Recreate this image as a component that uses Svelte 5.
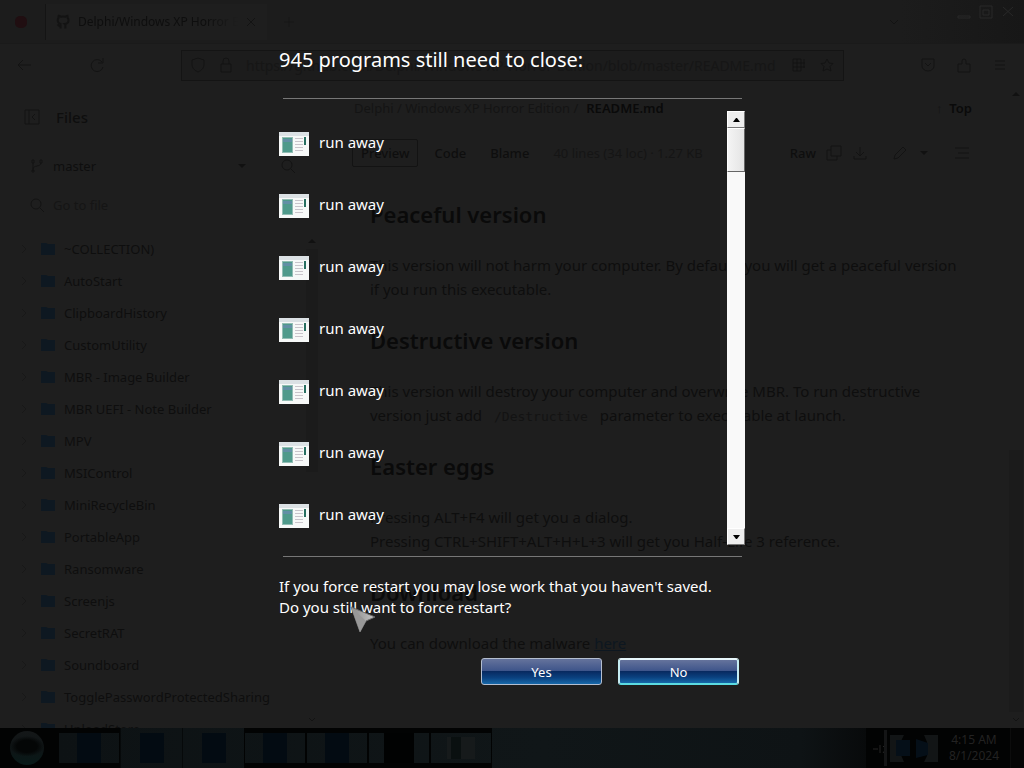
<script>
  const folders = [
    '~COLLECTION)', 'AutoStart', 'ClipboardHistory', 'CustomUtility', 'MBR - Image Builder',
    'MBR UEFI - Note Builder', 'MPV', 'MSIControl', 'MiniRecycleBin', 'PortableApp', 'Ransomware',
    'Screenjs', 'SecretRAT', 'Soundboard', 'TogglePasswordProtectedSharing', 'UploadStore'
  ];
  const programs = Array.from({ length: 7 }, () => 'run away');
  const tasks = ['framed', 'open', 'open', 'framed', 'framed', 'dark', 'window'];
</script>

<div class="screen">
  <div class="desktop">
    <header class="tabs">
      <span class="firefox"></span>
      <div class="tab">
        <svg class="mark" viewBox="0 0 16 16"><path d="M5.6 14.5v-2.6c-2 .4-2.500-.9-3-1.500M10.400 14.500v-2.900c0-.8-.2-1.300-.6-1.600 2.400-.3 3.700-1.400 3.700-3.800 0-1-.3-1.700-.9-2.300.2-.6.2-1.400-.1-2.100-.9 0-1.700.5-2.200.9a8 8 0 0 0-4.400 0c-.5-.4-1.400-.9-2.200-.9-.3.700-.3 1.500-.1 2.100-.6.600-.9 1.300-.9 2.300 0 2.400 1.400 3.500 3.700 3.800" /></svg>
        <span class="tab-name">Delphi/Windows XP Horror Edition</span>
        <svg class="small" viewBox="0 0 12 12"><path d="M2 2l8 8M10 2l-8 8" /></svg>
      </div>
      <svg class="plus" viewBox="0 0 16 16"><path d="M8 3v10M3 8h10" /></svg>
      <svg class="caret all" viewBox="0 0 12 12"><path d="M2 4l4 4 4-4" /></svg>
      <div class="window-buttons">
        <svg viewBox="0 0 16 16"><path d="M2 12h12v2H2z" /></svg>
        <svg viewBox="0 0 16 16"><path d="M2 2h12v12H2zM5 6h6v5H5z" /></svg>
        <svg viewBox="0 0 16 16"><path d="M3 3l10 9M13 3L3 12" /></svg>
      </div>
    </header>

    <div class="toolbar">
      <svg viewBox="0 0 16 16"><path d="M15 8H2M7 3L2 8l5 5" /></svg>
      <svg class="reload" viewBox="0 0 16 16"><path d="M13 5a6 6 0 1 0 1 5M14 1v5H9" /></svg>
      <div class="address">
        <svg viewBox="0 0 16 16"><path d="M8 1l6 2v4c0 4-2 6-6 8-4-2-6-4-6-8V3z" /></svg>
        <svg viewBox="0 0 16 16"><path d="M3 7h10v8H3zM5 7V4a3 3 0 0 1 6 0v3" /></svg>
        <input aria-label="Address" value="https://github.com/Delphi/Windows-XP-Horror-Edition/blob/master/README.md" readonly />
        <svg class="strong" viewBox="0 0 16 16"><path d="M2 2h8v12H2zM2 6h12M2 10h12M6 2v12M13 2v9" /></svg>
        <svg viewBox="0 0 16 16"><path d="M8 2l2 4 4 .5-3 3 1 4.500-4-2-4 2 1-4.500-3-3L6 6z" /></svg>
      </div>
      <div class="extras">
        <svg viewBox="0 0 16 16"><path d="M2 2h12v7a6 5 0 0 1-12 0zM5 6l3 3 3-3" /></svg>
        <svg viewBox="0 0 16 16"><path d="M2 15V7h4V4a2 2 0 0 1 4 0v3h4v8z" /></svg>
        <svg viewBox="0 0 16 16"><path d="M3 4h10M3 8h10M3 12h10" /></svg>
      </div>
    </div>

    <div class="page">
      <aside>
        <div class="files">
          <svg viewBox="0 0 16 16"><path d="M1 1h14v14H1zM5 1v14M11 5L8 8l3 3" /></svg>
          <b>Files</b>
        </div>
        <div class="branch">
          <svg viewBox="0 0 16 16"><path d="M4 5v8M12 5c0 4-8 2-8 6M3 2h2v3H3zM11 2h2v3h-2zM3 12h2v2H3z" /></svg>
          <span>master</span>
          <svg class="caret" viewBox="0 0 12 12"><path class="solid" d="M2 4h8L6 8z" /></svg>
          <svg class="find" viewBox="0 0 16 16"><path d="M7 2a5 5 0 1 0 0 10A5 5 0 0 0 7 2zM11 11l4 4" /></svg>
        </div>
        <div class="search">
          <svg viewBox="0 0 16 16"><path d="M7 2a5 5 0 1 0 0 10A5 5 0 0 0 7 2zM11 11l4 4" /></svg>
          <span>Go to file</span>
        </div>
        <div class="tree-wrap">
          <ul>
            {#each folders as folder}
              <li>
                <svg class="small dim" viewBox="0 0 12 12"><path d="M4 2l4 4-4 4" /></svg>
                <svg class="folder" viewBox="0 0 16 16"><path d="M1 2h5l2 1h7v11H1z" /></svg>
                <span>{folder}</span>
              </li>
            {/each}
          </ul>
          <div class="tree-bar">
            <svg viewBox="0 0 12 12"><path class="solid" d="M2 8h8L6 4z" /></svg>
            <i></i>
            <svg viewBox="0 0 12 12"><path d="M3 4l3 3 3-3" /></svg>
          </div>
        </div>
      </aside>

      <main>
        <div class="crumbs">
          <span>Delphi / Windows XP Horror Edition /</span>
          <b>README.md</b>
          <span class="top">↑ &nbsp;<b>Top</b></span>
        </div>
        <div class="modes">
          <b class="current">Preview</b>
          <b>Code</b>
          <b>Blame</b>
          <span class="meta">40 lines (34 loc) · 1.27 KB</span>
          <div class="actions">
            <b>Raw</b>
            <svg viewBox="0 0 16 16"><path d="M5 1h10v10H5zM5 5H1v10h10v-4" /></svg>
            <svg viewBox="0 0 16 16"><path d="M8 2v8M4 7l4 4 4-4M2 11v3h12v-3" /></svg>
            <svg class="pencil" viewBox="0 0 16 16"><path d="M2 14l1-4 8-8 3 3-8 8z" /></svg>
            <svg class="small" viewBox="0 0 12 12"><path class="solid" d="M2 4h8L6 8z" /></svg>
            <svg class="outline" viewBox="0 0 16 16"><path d="M1 3h14M4 8h11M1 13h14" /></svg>
          </div>
        </div>
        <article>
          <h2>Peaceful version</h2>
          <p>This version will not harm your computer. By default, you will get a peaceful version<br />if you run this executable.</p>
          <h2>Destructive version</h2>
          <p>This version will destroy your computer and overwrite MBR. To run destructive<br />version just add <code>/Destructive</code> parameter to executable at launch.</p>
          <h2>Easter eggs</h2>
          <p>Pressing ALT+F4 will get you a dialog.<br />Pressing CTRL+SHIFT+ALT+H+L+3 will get you Half-Life 3 reference.</p>
          <h2>Download</h2>
          <p>You can download the malware <a href="#here">here</a></p>
        </article>
      </main>
      <div class="page-bar">
        <svg viewBox="0 0 12 12"><path class="solid" d="M2 8h8L6 4z" /></svg>
        <i></i>
        <svg viewBox="0 0 12 12"><path d="M3 4l3 3 3-3" /></svg>
      </div>
    </div>

    <footer>
      <span class="orb"></span>
      <div class="tasks">
        {#each tasks as task}
          <span class="task {task}"><i></i></span>
        {/each}
      </div>
      <svg class="tray" viewBox="0 0 66 40">
        <path class="sound" d="M1 21h5M8 17v8M11 18l3 3-3 4" />
        <path class="divider" d="M12 2h3v36h-3z" />
        <path class="plate" d="M18 7h14l-3 6v14l3 7H18zM52 7h14v27H52l3-6V14z" />
        <path class="glyph" d="M24 12h14v16H24zM44 11l12 4v12l-12 3z" />
      </svg>
      <div class="clock"><span>4:15 AM</span><span>8/1/2024</span></div>
      <span class="peek"></span>
    </footer>
  </div>

  <section class="dialog" role="dialog" aria-labelledby="title">
    <h1 id="title">945 programs still need to close:</h1>
    <div class="list">
      <ul>
        {#each programs as program}
          <li>
            <svg viewBox="0 0 30 24">
              <rect width="30" height="24" fill="#f7f9f8" />
              <rect width="30" height="4" fill="#dbe1e4" />
              <rect x="3" y="5" width="11" height="16" fill="#92bdb4" />
              <rect x="4" y="6" width="9" height="14" fill="#4f9a8b" />
              <path d="M4 7h9v3H4z" fill="#628fa5" />
              <path d="M16 6.500h8M16 9.500h8M16 12.500h8M16 15.500h8M16 18.500h8" stroke="#c9c5cb" />
              <rect x="25" y="5" width="2" height="8" fill="#286f61" />
            </svg>
            <span>{program}</span>
          </li>
        {/each}
      </ul>
      <div class="scrollbar">
        <button aria-label="Scroll up"><svg viewBox="0 0 7 4"><path d="M0 4h7L4 0H3z" /></svg></button>
        <div class="thumb"></div>
        <button class="down" aria-label="Scroll down"><svg viewBox="0 0 7 4"><path d="M0 0h7L4 4H3z" /></svg></button>
      </div>
    </div>
    <p>If you force restart you may lose work that you haven't saved.<br />Do you still want to force restart?</p>
    <div class="answers">
      <button>Yes</button>
      <button class="default">No</button>
    </div>
  </section>

  <svg class="cursor" viewBox="0 0 26 28">
    <defs><linearGradient id="steel"><stop offset="0" stop-color="#8a8a8a" /><stop offset="1" stop-color="#c4c4c4" /></linearGradient></defs>
    <path d="M1 1l24 10-9 4-6 11z" fill="url(#steel)" stroke="#6a6a6a" />
    <path d="M1 1l15 14-6 11z" fill="#989898" />
  </svg>
</div>

<style>
  :global(body) { background: #1e1e1e; }
  * { box-sizing: border-box; }
  ul, h1, h2, p { margin: 0; padding: 0; list-style: none; }
  .screen {
    position: relative;
    display: grid;
    grid-template: minmax(0, 1fr) / minmax(0, 1fr);
    height: 100vh;
    overflow: hidden;
    font-family: "Noto Sans", "Open Sans", sans-serif;
  }
  .desktop, .dialog { grid-area: 1 / 1; }

  .desktop { display: flex; flex-direction: column; min-height: 0; color: #0e0e0e; font-size: 13px; }
  .desktop svg { width: 16px; height: 16px; flex: none; fill: none; stroke: #131313; stroke-width: 1; }
  .desktop svg.small { width: 12px; height: 12px; }
  .desktop svg.dim { stroke: #181818; }
  .desktop .solid { fill: #111; stroke: none; }
  .desktop b { font-weight: 500; }

  .tabs { display: flex; align-items: center; height: 44px; flex: none; background: linear-gradient(90deg, #1c1c1c 0 88%, #171717); border-bottom: 1px solid #1a1a1a; }
  .firefox { width: 12px; height: 12px; margin: 0 14px 0 15px; border-radius: 5px; background: #200e11; }
  .tab { display: flex; align-items: center; gap: 7px; width: 222px; height: 36px; margin-left: 4px; padding: 0 10px 0 9px; background: #1e1e1e; border-left: 1px solid #141414; }
  .desktop svg.mark { stroke-width: 2; }
  .tab-name { flex: 1; overflow: hidden; white-space: nowrap; font-size: 12px; mask-image: linear-gradient(90deg, #000 80%, transparent); }
  .desktop svg.plus { margin-left: 14px; stroke: #161616; }
  .desktop svg.all { width: 12px; margin-left: auto; }
  .window-buttons { display: flex; gap: 6px; align-self: flex-start; margin: 4px 8px 0 56px; }
  .desktop .window-buttons svg { stroke: #282828; }

  .toolbar { display: flex; align-items: center; height: 42px; flex: none; padding: 0 16px; }
  .reload { margin-left: 57px; }
  .address { display: flex; align-items: center; gap: 12px; flex: 1; height: 31px; margin-left: 76px; padding: 0 8px; border: 1px solid #141414; background: #1c1c1c; }
  .address input { flex: 1; min-width: 0; border: 0; padding: 0; background: none; color: #161616; font: 14px "Noto Sans", sans-serif; outline: 0; }
  .extras { display: flex; gap: 20px; margin-left: 76px; }

  .page { display: flex; flex: 1; min-height: 0; }
  aside { display: flex; flex-direction: column; width: 320px; flex: none; min-height: 0; }
  .files { display: flex; align-items: center; gap: 16px; height: 62px; padding-left: 24px; font-size: 15px; }
  .branch { display: flex; align-items: center; gap: 8px; height: 35px; padding: 0 24px 0 29px; }
  .desktop svg.caret { width: 12px; height: 12px; margin-left: auto; }
  .find { margin-left: 24px; }
  .search { display: flex; align-items: center; gap: 8px; height: 44px; padding-left: 29px; color: #151515; }
  .tree-wrap { display: flex; flex: 1; min-height: 0; overflow: hidden; padding-top: 6px; }
  .tree-wrap ul { flex: 1; }
  .tree-wrap li { display: flex; align-items: center; height: 32px; padding-left: 18px; white-space: nowrap; }
  .desktop svg.folder { margin: 0 8px 0 10px; fill: #0e1821; stroke: none; }
  .tree-bar, .page-bar { display: flex; flex-direction: column; align-items: center; justify-content: space-between; width: 16px; }
  .tree-bar i { flex: 1; width: 12px; margin-bottom: 240px; background: #1b1b1b; }
  .tree-bar svg, .page-bar svg { width: 12px; }
  .page-bar i { width: 14px; flex: 1; margin-top: 348px; background: #1b1b1b; }

  main { flex: 1; min-width: 0; padding-left: 32px; }
  .crumbs { display: flex; gap: 8px; height: 44px; padding: 0 36px 0 2px; align-items: center; color: #141414; }
  .desktop .crumbs b { color: #0a0a0a; font-weight: 600; }
  .top { margin-left: auto; }
  .modes { display: flex; align-items: center; gap: 24px; height: 46px; }
  .modes .current { margin-right: -8px; padding: 3px 8px; border: 1px solid #131313; border-radius: 2px; line-height: 20px; }
  .meta { color: #151515; font-size: 13px; }
  .actions { display: flex; align-items: center; gap: 10px; margin-left: auto; padding-right: 38px; }
  .pencil { margin-left: 14px; }
  .outline { margin-left: 14px; }
  article { padding: 23px 0 0 18px; white-space: nowrap; font-size: 15px; line-height: 24px; }
  h2 { font-size: 22px; line-height: 30px; font-weight: 600; color: #0a0a0a; margin-bottom: 24px; }
  article p { margin-bottom: 24px; }
  code { padding: 0 8px; font: 13px "DejaVu Sans Mono", monospace; color: #131313; }
  article a { color: #0d1720; }

  footer { display: flex; align-items: center; height: 40px; flex: none; background: #020303; }
  .orb { width: 34px; height: 34px; margin: 0 14px 0 10px; border-radius: 50%; background: radial-gradient(ellipse 50% 30% at 50% 45%, #040606 60%, transparent), linear-gradient(#141718, #0e1415 55%, #081a19); }
  .tasks { display: flex; flex: 1; height: 100%; background: linear-gradient(90deg, #0d1214, #101618 60%, #0e1315 92%, #080a0b); }
  .task { display: flex; justify-content: center; align-items: center; width: 62px; border-left: 1px solid #06090a; }
  .task i { width: 24px; height: 30px; background: #030b12; }
  .task.framed, .task.dark, .task.window { border: 5px solid #020303; border-width: 5px 1px; }
  .task.dark i { width: 30px; background: #010202; }
  .task.window i { width: 28px; height: 22px; background: linear-gradient(90deg, #161a1b 4px, #0a1010 4px 14px, #161a1b 14px); }
  .desktop svg.tray { width: 66px; height: 40px; margin-left: 6px; stroke: none; }
  .sound { stroke: #242424; }
  .divider { fill: #141516; }
  .plate { fill: #121516; }
  .glyph { fill: #050f18; }
  .clock { display: flex; flex-direction: column; align-items: center; width: 72px; font-size: 12px; line-height: 16px; color: #222; }
  .peek { width: 14px; height: 100%; border-left: 1px solid #0c0c0c; background: #050505; }

  .dialog { width: 466px; max-width: 100%; margin: 0 auto; padding-top: 46px; color: #fff; z-index: 1; }
  h1 { font-size: 20px; line-height: 28px; font-weight: 400; }
  .dialog h1 { margin: 0; color: #fff; }
  .list { position: relative; display: flex; margin-top: 24px; padding: 13px 0 12px; }
  .list::before, .list::after { content: ""; position: absolute; left: 4px; right: 3px; height: 1px; background: #777; }
  .list::before { top: 0; }
  .list::after { bottom: 0; }
  .list ul { flex: 1; }
  .list li { display: flex; align-items: center; gap: 10px; height: 62px; font-size: 15px; line-height: 20px; }
  .list li svg { width: 30px; height: 24px; margin-top: 4px; }
  .scrollbar { display: flex; flex-direction: column; width: 18px; background: #f9f9f9; }
  .scrollbar button { display: grid; place-items: center; width: 100%; height: 17px; padding: 0; border: 1px solid #fff; border-color: #fff #777 #777 #fff; background: #eee; }
  .scrollbar svg { width: 7px; height: 4px; }
  .thumb { height: 44px; border: 1px solid #fff; border-color: #fff #666 #666 #fff; background: linear-gradient(90deg, #f4f4f4, #e4e4e4); }
  .scrollbar .down { margin-top: auto; }
  .dialog p { margin-top: 19px; font-size: 15px; line-height: 21px; white-space: nowrap; }
  .answers { display: flex; justify-content: flex-end; gap: 16px; padding-right: 6px; margin-top: 40px; }
  .answers button {
    width: 121px;
    height: 27px;
    padding: 0;
    border: 1px solid #b4bed0;
    border-radius: 3px;
    background: linear-gradient(#65739c 0%, #3d548a 48%, #082a61 50%, #0b417f 75%, #1668a9 100%);
    color: #fff;
    font: 13px/20px "Noto Sans", sans-serif;
  }
  .answers .default { border: 2px solid; border-color: #e8f7fb #c5edf3 #5bdce2; }
  .cursor { position: absolute; left: 350px; top: 606px; width: 26px; height: 28px; z-index: 2; }
</style>
